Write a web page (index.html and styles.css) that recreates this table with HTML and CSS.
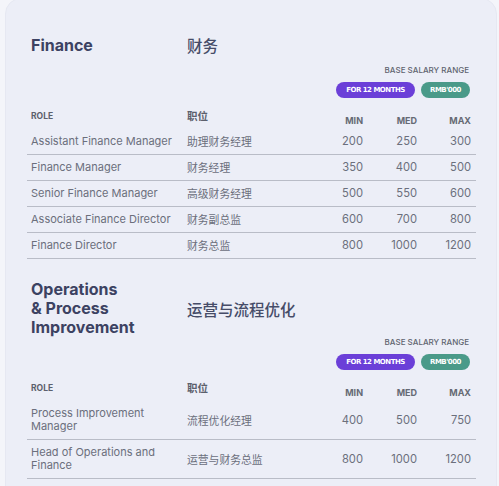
FILE: index.html
```html
<!DOCTYPE html>
<html lang="en">
<head>
<meta charset="utf-8">
<title>Salary ranges</title>
<link rel="stylesheet" href="styles.css">
</head>
<body>
<div class="card">
  <section class="sec">
    <div class="title-row">
      <h2 class="title">Finance</h2>
      <div class="cn-title">财务</div>
    </div>
    <div class="range">
      <div class="range-label">BASE SALARY RANGE</div>
      <div class="badges"><span class="badge purple">FOR 12 MONTHS</span><span class="badge teal">RMB'000</span></div>
    </div>
    <table class="tbl">
      <colgroup><col class="c-role"><col class="c-cn"><col class="c-num"><col class="c-num"><col class="c-num"></colgroup>
      <thead>
        <tr><th class="h-role">ROLE</th><th class="h-cn">职位</th><th class="num">MIN</th><th class="num">MED</th><th class="num">MAX</th></tr>
      </thead>
      <tbody>
        <tr><td>Assistant Finance Manager</td><td class="cn">助理财务经理</td><td class="num">200</td><td class="num">250</td><td class="num">300</td></tr>
        <tr><td>Finance Manager</td><td class="cn">财务经理</td><td class="num">350</td><td class="num">400</td><td class="num">500</td></tr>
        <tr><td>Senior Finance Manager</td><td class="cn">高级财务经理</td><td class="num">500</td><td class="num">550</td><td class="num">600</td></tr>
        <tr><td>Associate Finance Director</td><td class="cn">财务副总监</td><td class="num">600</td><td class="num">700</td><td class="num">800</td></tr>
        <tr><td>Finance Director</td><td class="cn">财务总监</td><td class="num">800</td><td class="num">1000</td><td class="num">1200</td></tr>
      </tbody>
    </table>
  </section>
  <section class="sec">
    <div class="title-row">
      <h2 class="title">Operations<br>&amp; Process<br>Improvement</h2>
      <div class="cn-title">运营与流程优化</div>
    </div>
    <div class="range">
      <div class="range-label">BASE SALARY RANGE</div>
      <div class="badges"><span class="badge purple">FOR 12 MONTHS</span><span class="badge teal">RMB'000</span></div>
    </div>
    <table class="tbl">
      <colgroup><col class="c-role"><col class="c-cn"><col class="c-num"><col class="c-num"><col class="c-num"></colgroup>
      <thead>
        <tr><th class="h-role">ROLE</th><th class="h-cn">职位</th><th class="num">MIN</th><th class="num">MED</th><th class="num">MAX</th></tr>
      </thead>
      <tbody>
        <tr><td>Process Improvement Manager</td><td class="cn">流程优化经理</td><td class="num">400</td><td class="num">500</td><td class="num">750</td></tr>
        <tr><td>Head of Operations and Finance</td><td class="cn">运营与财务总监</td><td class="num">800</td><td class="num">1000</td><td class="num">1200</td></tr>
      </tbody>
    </table>
  </section>
</div>
</body>
</html>
```
FILE: styles.css
```css
html, body {
  margin: 0;
  padding: 0;
}
body {
  background: #f4f5fa;
  font-family: Inter, "Noto Sans CJK SC", sans-serif;
  color: #6b6f7c;
}
.card {
  margin: -2px 0 0 5px;
  width: 492px;
  box-sizing: border-box;
  padding: 26px 22px 20px 21px;
  background: #eceef7;
  border: 1px solid #e6e8f2;
  border-radius: 16px;
  min-height: 520px;
}
.sec + .sec {
  margin-top: 21px;
}
.title-row {
  display: grid;
  grid-template-columns: 156px 1fr;
  align-items: center;
  min-height: 40px;
}
.title {
  margin: 0;
  padding-left: 4px;
  font-size: 16px;
  line-height: 19px;
  font-weight: 700;
  color: #3c4262;
}
.cn-title {
  padding-left: 4px;
  font-family: "Noto Sans CJK SC", sans-serif;
  font-size: 15.5px;
  font-weight: 500;
  color: #464c68;
}
.range {
  display: flex;
  flex-direction: column;
  align-items: flex-end;
  padding-right: 4px;
}
.range-label {
  font-size: 8px;
  line-height: 10px;
  font-weight: 500;
  color: #60646f;
  padding-right: 1px;
}
.badges {
  display: flex;
  gap: 6px;
  margin-top: 7px;
}
.badge {
  height: 16px;
  line-height: 16px;
  border-radius: 8px;
  padding: 0 6px;
  color: #fff;
  font-family: "DejaVu Sans", sans-serif;
  font-weight: 700;
  font-size: 7px;
  letter-spacing: -0.5px;
  text-align: center;
  box-sizing: border-box;
}
.badge.purple {
  background: #6b3fd8;
  width: 79px;
}
.badge.teal {
  background: #4a9a89;
  width: 49px;
}
.tbl {
  margin-top: 6px;
  width: 449px;
  table-layout: fixed;
  border-collapse: collapse;
}
.c-role { width: 156px; }
.c-cn { width: 131px; }
.c-num { width: 54px; }
.tbl th {
  height: 23px;
  padding: 0 4px 2px;
  font-size: 8.5px;
  font-weight: 700;
  color: #5c606c;
  text-align: left;
  vertical-align: middle;
}
.tbl th.h-cn {
  font-family: "Noto Sans CJK SC", sans-serif;
  font-size: 10.5px;
  font-weight: 700;
}
.tbl th.num {
  text-align: right;
  padding: 0 5px 0 0;
  vertical-align: bottom;
  line-height: 16px;
  font-size: 9px;
  color: #666a74;
}
.tbl td {
  padding: 6px 4px;
  font-size: 11px;
  line-height: 13px;
  color: #6b6f7c;
  border-bottom: 1px solid #b9bcc7;
  vertical-align: middle;
}
.tbl td.cn {
  font-family: "Noto Sans CJK SC", sans-serif;
  font-size: 10.8px;
}
.tbl td.num {
  text-align: right;
  padding-right: 5px;
  font-size: 11.2px;
}
```
